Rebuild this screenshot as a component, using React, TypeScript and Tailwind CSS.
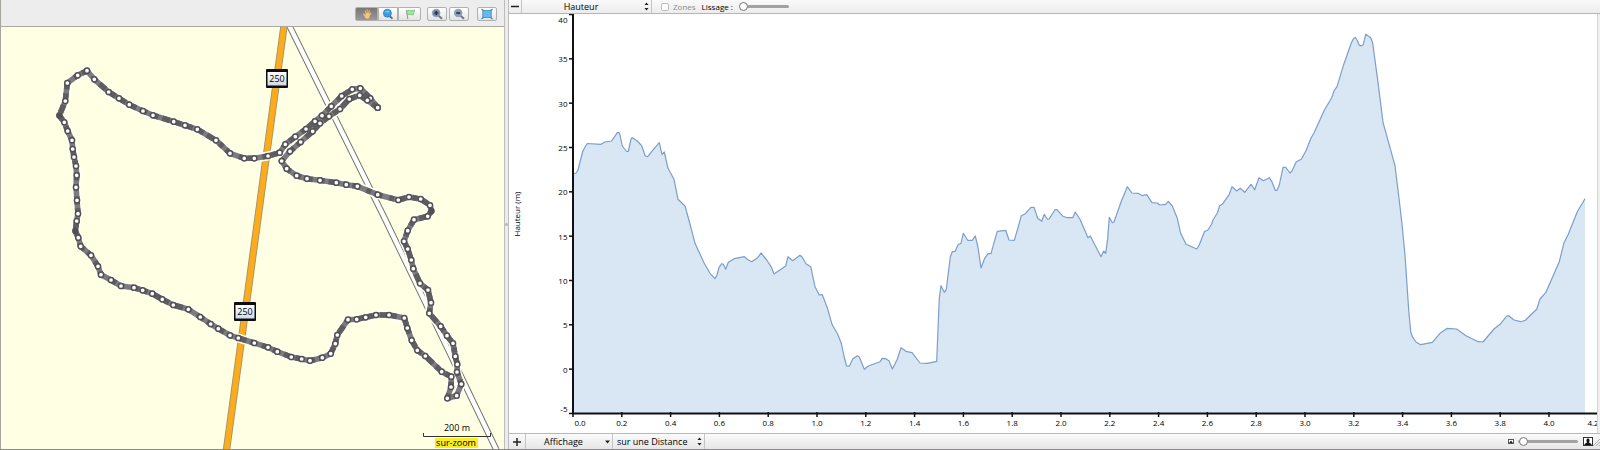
import { useState } from 'react';
import type { ReactNode } from 'react';

type Point = [number, number];

// GPS track, starting from the north-east tip
const track: Point[] = [
  [377.7, 107.7], [370.3, 98.3], [360.3, 88.3], [352.3, 89.3], [341.7, 96], [331.3, 106.3], [322, 115.7],
  [315, 121.3], [306, 129], [295.3, 136.7], [285.3, 144.3], [279.7, 152.7], [268, 156], [254.3, 158.3],
  [244.3, 158.3], [230, 153.3], [216, 140.3], [197.3, 129.3], [185, 125.3], [173.7, 121.7], [153, 115.3],
  [143, 111], [129.3, 104.7], [119, 98.3], [108.7, 92], [94.3, 79.3], [87, 70.7], [77.7, 75.3], [67.3, 83],
  [65.3, 101], [59.3, 115.5], [64.3, 122.3], [67.7, 131], [72, 140.3], [72.7, 149], [74, 157], [76, 166],
  [76.7, 175.3], [76, 187.3], [77, 200.3], [78, 213.7], [76.7, 221], [75.3, 231], [78.3, 237.7],
  [80.7, 246.3], [91, 255.3], [98, 266.3], [101, 274.7], [111, 280], [121, 286], [134, 287.7],
  [142.7, 290.3], [152.3, 293.7], [162.3, 299.3], [173.3, 305], [188.3, 309.3], [200.3, 317], [210.7, 324],
  [218.3, 328.7], [230, 335.3], [238.3, 338], [254.3, 343], [268, 347.3], [277.3, 351.7], [291.3, 357],
  [301.7, 359], [310, 360.7], [322.3, 357.7], [330.7, 353.7], [335.3, 343.7], [337.3, 335], [348, 319.7],
  [356.7, 319.3], [365.7, 317.3], [376, 315], [389, 315], [404.3, 318], [407.3, 328], [411.7, 340.3],
  [417.3, 350.3], [425.3, 356], [441.7, 371.7], [451.3, 376.7], [451, 387], [447.3, 398.3], [456.7, 395.7],
  [461.3, 384], [457, 372], [457.3, 364.3], [455.3, 356.3], [453, 343.3], [447, 335.7], [440.7, 326.3],
  [429.3, 313.3], [431, 302.7], [428, 290], [420, 283.3], [413.3, 268.7], [411.3, 260], [407.7, 249],
  [404, 241.3], [407.7, 230.7], [414, 219.7], [427.7, 216.3], [431.5, 211], [430, 205.3], [420.7, 199],
  [409, 197], [398.3, 200], [377.7, 194.7], [357.3, 186.3], [346.3, 184.7], [336.3, 182.7], [320, 180.3],
  [307, 178.7], [296.7, 175.7], [286.7, 168.7], [281.7, 161], [290, 151.3], [300.7, 142], [312.7, 131.3],
  [320, 123.3], [329, 116.3], [340, 109], [349.3, 99], [359.7, 95.3], [367.3, 100.3], [377.7, 107.7],
];

// bends of the track that carry no marker
const plainBends = [30, 42, 104];

const profile: Point[] = [
  [573, 174], [576, 173], [578, 170], [580, 162], [582.7, 151.5], [585, 147], [587.3, 143.5], [601, 144.3],
  [605, 142], [611.7, 141], [617.3, 132.7], [619, 132.5], [620, 135], [622.3, 146], [626.7, 151.5], [628.3, 151.5],
  [631, 139], [632.3, 137.7], [637.3, 141], [641.7, 145.7], [645.3, 156], [647.7, 156.7], [651.7, 151.7],
  [659.3, 142.7], [662, 154.3], [664.3, 152], [668, 168.3], [674, 179.3], [678, 199.3], [685, 206],
  [690, 224], [695, 243.3], [704, 262.7], [710, 273.3], [715, 278.7], [717, 275], [719, 267.3], [721.7, 263.7],
  [723.3, 264.3], [725.7, 269.3], [728.3, 262.3], [734.3, 258.7], [744.3, 256.7], [748.3, 260],
  [751.7, 261.7], [757.7, 257.7], [761, 253], [766.7, 260], [771.7, 267.7], [774, 274], [785.7, 266],
  [788, 256.7], [792.7, 260.7], [800, 255.3], [802.3, 257.3], [806, 263.7], [810.7, 266.7], [815, 286.7],
  [819.3, 295], [822.3, 294.7], [827.3, 307.7], [832, 324.3], [837.7, 334.3], [841.3, 343.3], [844, 356],
  [846.5, 366], [849.3, 366.2], [852.7, 359], [857.3, 355.7], [859.3, 357], [864.3, 369.3], [868.3, 366],
  [880, 361.7], [882.3, 358.3], [885.7, 358.7], [889, 360.7], [892.3, 369], [897.3, 359.3], [901, 347.7],
  [906, 351.3], [912, 352.7], [920, 363], [927.3, 363.3], [936.7, 361.3], [939.3, 298.3], [941, 285.7],
  [944.3, 292.3], [946.3, 289.3], [950.3, 256.7], [952.3, 251.7], [955.3, 251.3], [958, 244.7], [961, 243.3],
  [963.3, 233.3], [967.7, 240.3], [972.3, 240.3], [975.3, 236], [978, 247.3], [981, 268], [984.7, 258.3],
  [988, 253.7], [991, 253.7], [994.3, 241.7], [997.3, 231.3], [1005.7, 230.3], [1009, 240], [1014.3, 240.3],
  [1018.3, 226.7], [1021.3, 215.7], [1025.3, 213.7], [1031, 207.3], [1034, 207.3], [1037.7, 218.3],
  [1041.7, 221.3], [1044.3, 214.3], [1047.3, 219.3], [1049.3, 218.7], [1055, 209.7], [1057, 209.7],
  [1063, 216.3], [1067.3, 217.7], [1072.7, 217.7], [1075.3, 212], [1080, 219.3], [1088, 237.7],
  [1090.3, 236], [1101, 256.7], [1103.7, 251], [1105.7, 253.3], [1107.7, 238.3], [1109.3, 217.3],
  [1112.3, 222.7], [1114, 222], [1121.3, 201.3], [1127.3, 186.7], [1132, 193], [1138.3, 193.3],
  [1142.3, 195.7], [1146.7, 194.7], [1152, 202.7], [1157.3, 203], [1159.7, 205], [1165.7, 204.3],
  [1168.3, 201.3], [1172.3, 206], [1177.3, 218.3], [1180.7, 233.3], [1186, 244.3], [1191.7, 246.7],
  [1196.7, 249], [1199, 245.5], [1204.5, 231.5], [1208, 230], [1211.7, 224], [1213, 220], [1217.3, 213],
  [1219.7, 205.7], [1222.3, 204.3], [1229.3, 194.3], [1232, 186.7], [1236.7, 191], [1240.3, 188.3],
  [1244.7, 192.3], [1251, 184.3], [1254.7, 189.7], [1259, 177.7], [1263.3, 180.7], [1269.3, 177.7],
  [1271.7, 181.3], [1275.3, 190.3], [1277, 190.3], [1279.3, 185], [1283, 167.3], [1285.7, 167.3],
  [1290, 173], [1292.3, 170.3], [1296.3, 161.7], [1301.3, 159.3], [1306, 150.7], [1311, 138], [1314, 133],
  [1324.3, 110.3], [1331.7, 97.7], [1334.3, 90.3], [1337, 86.7], [1344, 63.7], [1351.3, 43], [1353.3, 39], [1355.3, 37.3],
  [1357.3, 40.5], [1359.3, 45.3], [1361.5, 45.8], [1363.3, 44.7], [1365.7, 34.3], [1370.7, 37.7], [1372.7, 43.3],
  [1378, 82.3], [1383, 122.3], [1395, 165.7], [1399.3, 200.7], [1402, 224], [1405, 255], [1408.7, 310],
  [1410.7, 331.7], [1412.3, 336.7], [1416, 342], [1420.7, 344.7], [1432.3, 342.3], [1440, 333.3],
  [1447.3, 328.3], [1456.7, 329], [1466, 335.7], [1478.3, 341.7], [1483, 342], [1494, 329], [1500.7, 323.7],
  [1506.7, 316], [1508.7, 315.7], [1514, 320], [1520.7, 321.7], [1525.3, 320.3], [1536.7, 309.3], [1540, 299],
  [1545.7, 292.7], [1559.3, 261.7], [1564, 242.7], [1568.3, 234.3], [1577.3, 211.7], [1585, 198.7],
];

const toPath = (points: Point[]) => 'M' + points.map(p => p.join(' ')).join('L');

const heights = [40, 35, 30, 25, 20, 15, 10, 5, 0, -5];
const distances = Array.from({ length: 22 }, (_, i) => (i * 0.2).toFixed(1));

function RoadShield({ x, y }: { x: number; y: number }) {
  return (
    <g>
      <rect x={x} y={y} width="22" height="19" rx="1" fill="#0b0d10" />
      <rect x={x + 1.5} y={y + 3} width="19" height="13.5" fill="url(#shield)" />
      <text x={x + 11} y={y + 13} textAnchor="middle" className="fill-black text-[9px]">250</text>
    </g>
  );
}

function TrackMap() {
  const line = toPath(track);

  return (
    <svg viewBox="1 27 503 422" className="block h-auto w-full bg-[#ffffe3]" role="img" aria-label="Carte">
      <defs>
        <linearGradient id="shield" x1="0" y1="0" x2="0" y2="1">
          <stop offset="0" stopColor="#fff" />
          <stop offset="1" stopColor="#cddbe8" />
        </linearGradient>
      </defs>

      <path d="M289.5 26L385.5 220L496.5 450" fill="none" stroke="#77776e" strokeWidth="6.4" />
      <path d="M289.5 26L385.5 220L496.5 450" fill="none" stroke="#fff" strokeWidth="4.4" />
      <path d="M284 26L226.5 450" stroke="#a3936a" strokeWidth="7.4" />
      <path d="M284 26L226.5 450" stroke="#fbab1c" strokeWidth="5.6" />

      <path d={line} fill="none" stroke="#fffff4" strokeWidth="9" strokeLinejoin="round" />
      <path d={line} fill="none" stroke="#7d7b7d" strokeWidth="5.6" strokeLinejoin="round" strokeLinecap="round" />
      <path d={line} fill="none" stroke="#5f5d60" strokeWidth="5.6" strokeLinejoin="round" strokeDasharray="5 7 8 4" />
      {track.map(([x, y], index) => (
        plainBends.includes(index) ? (
          <circle key={index} cx={x} cy={y} r="3.2" fill="#525053" />
        ) : (
          <circle key={index} cx={x} cy={y} r="2.6" fill="#fff" stroke="#525053" strokeWidth="1.5" />
        )
      ))}

      <RoadShield x={266} y={69} />
      <RoadShield x={234} y={302} />

      <text x="457" y="431" textAnchor="middle" className="fill-black text-[9px]">200 m</text>
      <path d="M423.5 433V436.5H490.5V433" fill="none" stroke="#333" />
      <rect x="435" y="438" width="43" height="10" fill="#f8ee1c" />
      <text x="456" y="446" textAnchor="middle" className="fill-black text-[9px]">sur-zoom</text>
    </svg>
  );
}

function HeightChart() {
  return (
    <svg viewBox="509 14 1091 419" className="block h-auto w-full bg-white" role="img" aria-label="Hauteur (m)">
      <path d={toPath(profile) + 'V413H573Z'} fill="#d9e6f3" />
      <path d={toPath(profile)} fill="none" stroke="#7b9fc9" strokeWidth="1.2" strokeLinejoin="round" />
      <path d="M573 14V414M572 413.5H1598" stroke="#111" strokeWidth="2" />

      {heights.map((height, i) => (
        <g key={height}>
          <path d={`M569 ${14.5 + i * 44.33}h4`} stroke="#111" strokeWidth="1.5" />
          <text
            x="567.5"
            y={height === 40 ? 23 : height === -5 ? 412 : 18 + i * 44.33}
            textAnchor="end"
            className="fill-black text-[8px]"
          >
            {height}
          </text>
        </g>
      ))}

      {distances.map((distance, i) => (
        <g key={distance}>
          <path d={`M${573 + i * 48.8} 412v5`} stroke="#111" strokeWidth="1.5" />
          <text
            x={i === 0 ? 580 : i === 21 ? 1593 : 573 + i * 48.8}
            y="426"
            textAnchor="middle"
            className="fill-black text-[8px]"
          >
            {distance}
          </text>
        </g>
      ))}

      <text transform="rotate(-90 520 214)" x="520" y="214" textAnchor="middle" className="fill-black text-[8px]">
        Hauteur (m)
      </text>
      <path d="M1597.5 14V433" stroke="#d4d4d4" />
      <path d="M1599 14V433" stroke="#f0f0f0" strokeWidth="2" />
    </svg>
  );
}

function ToolButton({ label, pressed, className, children }: {
  label: string;
  pressed?: boolean;
  className: string;
  children: ReactNode;
}) {
  return (
    <button
      type="button"
      aria-label={label}
      aria-pressed={pressed}
      className={`flex h-[14px] items-center justify-center border border-[#b0b0b0] ${className}`}
    >
      <svg viewBox="0 0 12 12" className="size-3" fill="none">
        {children}
      </svg>
    </button>
  );
}

function MapToolbar() {
  return (
    <div className="flex h-[27px] items-center justify-end border-b border-[#a9a99f] bg-[#ededed] pt-px pr-[7px]">
      <div className="flex">
        <ToolButton label="Déplacer" pressed className="w-[23px] rounded-l-xs bg-linear-to-b from-[#777] to-[#999]">
          <path d="M2.6 7.2L1.8 5.6L3 5.2L4.4 6.6L3.8 2.6L4.8 2.2L5.5 5L5.6 1.2H6.7L6.8 5L8 1.8L9 2.2L8.3 5.8L9.8 4.2L10.6 4.8L8.8 8.4L8 11H4.8Z" fill="#f0c48c" stroke="#b07c45" strokeWidth="0.4" />
        </ToolButton>
        <ToolButton label="Zoom" className="w-[20px] bg-linear-to-b from-white to-[#e4e4e4]">
          <path d="M7.5 8L10.5 10.6" stroke="#666" strokeWidth="1.8" />
          <circle cx="5.4" cy="5.2" r="4" fill="#3b9de2" stroke="#2d78b5" strokeWidth="0.7" />
          <path d="M2.8 4.2a3 2.4 0 0 1 5.2 0z" fill="#9bd3f7" />
        </ToolButton>
        <ToolButton label="Repère" className="w-[23px] rounded-r-xs bg-linear-to-b from-white to-[#e4e4e4]">
          <path d="M2.5 2.5L3.8 11" stroke="#8a9a8a" />
          <path d="M2.5 2.5C5 1.5 6 4 10.5 2L9.5 6.6C7 7.6 6 5.6 3.3 7Z" fill="#a8e0a2" stroke="#6db86b" strokeWidth="0.7" />
        </ToolButton>
      </div>
      <ToolButton label="Zoom avant" className="ml-[6px] w-[20px] rounded-xs bg-linear-to-b from-white to-[#e4e4e4]">
        <path d="M7.5 7.8L11 10.8" stroke="#777" strokeWidth="2" />
        <circle cx="5.2" cy="5" r="3.8" fill="#7488a2" stroke="#8fa3ba" />
        <path d="M3.2 5H7.2M5.2 3V7" stroke="#1a2430" strokeWidth="1.2" />
      </ToolButton>
      <ToolButton label="Zoom arrière" className="ml-[2px] w-[20px] rounded-xs bg-linear-to-b from-white to-[#e4e4e4]">
        <path d="M7.5 7.8L11 10.8" stroke="#777" strokeWidth="2" />
        <circle cx="5.2" cy="5" r="3.8" fill="#8b9db4" stroke="#8fa3ba" />
        <path d="M3.2 5H7.2" stroke="#1a2430" strokeWidth="1.4" />
      </ToolButton>
      <ToolButton label="Ajuster" className="ml-[8px] w-[20px] rounded-xs bg-linear-to-b from-white to-[#e4e4e4]">
        <path d="M0.5 1L3 3M11.5 1L9 3M0.5 11L3 9M11.5 11L9 9" stroke="#4a86b8" strokeWidth="1.4" />
        <rect x="1.8" y="2.6" width="8.4" height="6.8" fill="#67b7ef" stroke="#3e8ac4" strokeWidth="0.8" />
      </ToolButton>
    </div>
  );
}

function StepArrows() {
  return (
    <svg viewBox="0 0 5 9" className="pointer-events-none mr-[2px] h-[9px] w-[5px] shrink-0" fill="#222">
      <path d="M2.5 0.5L4.5 3H0.5ZM2.5 8.5L4.5 6H0.5Z" />
    </svg>
  );
}

const slider =
  'm-0 h-[9px] appearance-none bg-transparent ' +
  '[&::-webkit-slider-runnable-track]:h-[3px] [&::-webkit-slider-runnable-track]:rounded-full [&::-webkit-slider-runnable-track]:bg-[#a2a2a2] ' +
  '[&::-webkit-slider-thumb]:-mt-[3px] [&::-webkit-slider-thumb]:size-[9px] [&::-webkit-slider-thumb]:appearance-none [&::-webkit-slider-thumb]:rounded-full [&::-webkit-slider-thumb]:border [&::-webkit-slider-thumb]:border-[#777] [&::-webkit-slider-thumb]:bg-white';

function ChartToolbar() {
  const [smoothing, setSmoothing] = useState(0);

  return (
    <div className="flex h-[14px] items-center border-b border-[#b5b5b5] bg-linear-to-b from-[#fafafa] to-[#ececec] text-[9px] leading-[13px]">
      <button type="button" aria-label="Retirer" className="flex h-[13px] w-[13px] items-center justify-center border-r border-[#c4c4c4]">
        <svg viewBox="0 0 8 8" className="size-2"><path d="M0 3.5H8" stroke="#222" strokeWidth="1.5" /></svg>
      </button>
      <div className="flex h-[13px] w-[130px] items-center border-r border-[#c4c4c4]">
        <select aria-label="Courbe" className="h-[13px] min-w-0 flex-1 appearance-none bg-transparent pr-1 text-center">
          <option>Hauteur</option>
        </select>
        <StepArrows />
      </div>
      <label className="ml-[9px] flex items-center gap-1 text-[8px] text-[#8c8c8c]">
        <input type="checkbox" disabled className="m-0 size-[8px] appearance-none rounded-xs border border-[#bdbdbd] bg-white" />
        Zones
      </label>
      <label className="ml-[6px] flex items-center gap-[6px] text-[8px] text-black">
        Lissage :
        <input
          type="range"
          value={smoothing}
          onChange={e => setSmoothing(Number(e.target.value))}
          className={`w-[50px] ${slider}`}
        />
      </label>
    </div>
  );
}

function ChartFooter() {
  const [zoom, setZoom] = useState(2);

  return (
    <div className="flex h-[16px] items-center border-t border-[#b9b9b9] bg-linear-to-b from-[#fbfbfb] to-[#e6e6e6] text-[9px] leading-[15px]">
      <button type="button" aria-label="Ajouter" className="flex h-[15px] w-[17px] items-center justify-center border-r border-[#c4c4c4]">
        <svg viewBox="0 0 8 8" className="size-2"><path d="M0 4H8M4 0V8" stroke="#222" strokeWidth="1.5" /></svg>
      </button>
      <div className="flex h-[15px] w-[87px] items-center border-r border-[#c4c4c4]">
        <select aria-label="Affichage" className="h-[15px] min-w-0 flex-1 appearance-none bg-transparent pr-1 text-center">
          <option>Affichage</option>
        </select>
        <svg viewBox="0 0 5 4" className="pointer-events-none mr-[2px] h-[4px] w-[5px]"><path d="M0 0.5H5L2.5 3.5Z" fill="#222" /></svg>
      </div>
      <div className="flex h-[15px] w-[92px] items-center border-r border-[#c4c4c4] pl-1">
        <select aria-label="Axe horizontal" className="h-[15px] min-w-0 flex-1 appearance-none bg-transparent">
          <option>sur une Distance</option>
        </select>
        <StepArrows />
      </div>
      <div className="ml-auto flex items-center">
        <svg viewBox="0 0 6 5" className="mr-1 h-[5px] w-[6px]">
          <rect x="0.5" y="0.5" width="5" height="4" fill="#fff" stroke="#555" />
          <path d="M1 4L3 1.5L5 4Z" fill="#222" />
        </svg>
        <input
          type="range"
          aria-label="Zoom du graphique"
          value={zoom}
          onChange={e => setZoom(Number(e.target.value))}
          className={`w-[60px] ${slider}`}
        />
        <svg viewBox="0 0 10 9" className="ml-[5px] h-[9px] w-[10px]">
          <rect x="0.5" y="0.5" width="9" height="8" fill="#fff" stroke="#333" />
          <path d="M1.5 8V7L4 5.6C2.8 3.6 3.6 1.6 5 1.6S7.2 3.6 6 5.6L8.5 7V8Z" fill="#111" />
        </svg>
        <svg viewBox="0 0 7 8" className="h-[8px] w-[7px] self-end">
          <path d="M0 8L7 1M3 8L7 4M6 8L7 7" stroke="#999" strokeWidth="0.8" />
        </svg>
      </div>
    </div>
  );
}

export default function App() {
  return (
    <div className="grid grid-cols-[504fr_5px_1091fr] border-b border-[#8b8890] bg-[#ededed] font-['Open_Sans','Noto_Sans',sans-serif] font-medium text-black">
      <div className="border-l border-[#a5a5a0]">
        <MapToolbar />
        <TrackMap />
      </div>
      <div className="flex items-center justify-center border-x border-[#bdbdbd] bg-[#ececec]">
        <div className="size-[3px] rounded-full bg-[#b5b5b5]" />
      </div>
      <div>
        <ChartToolbar />
        <HeightChart />
        <ChartFooter />
      </div>
    </div>
  );
}
